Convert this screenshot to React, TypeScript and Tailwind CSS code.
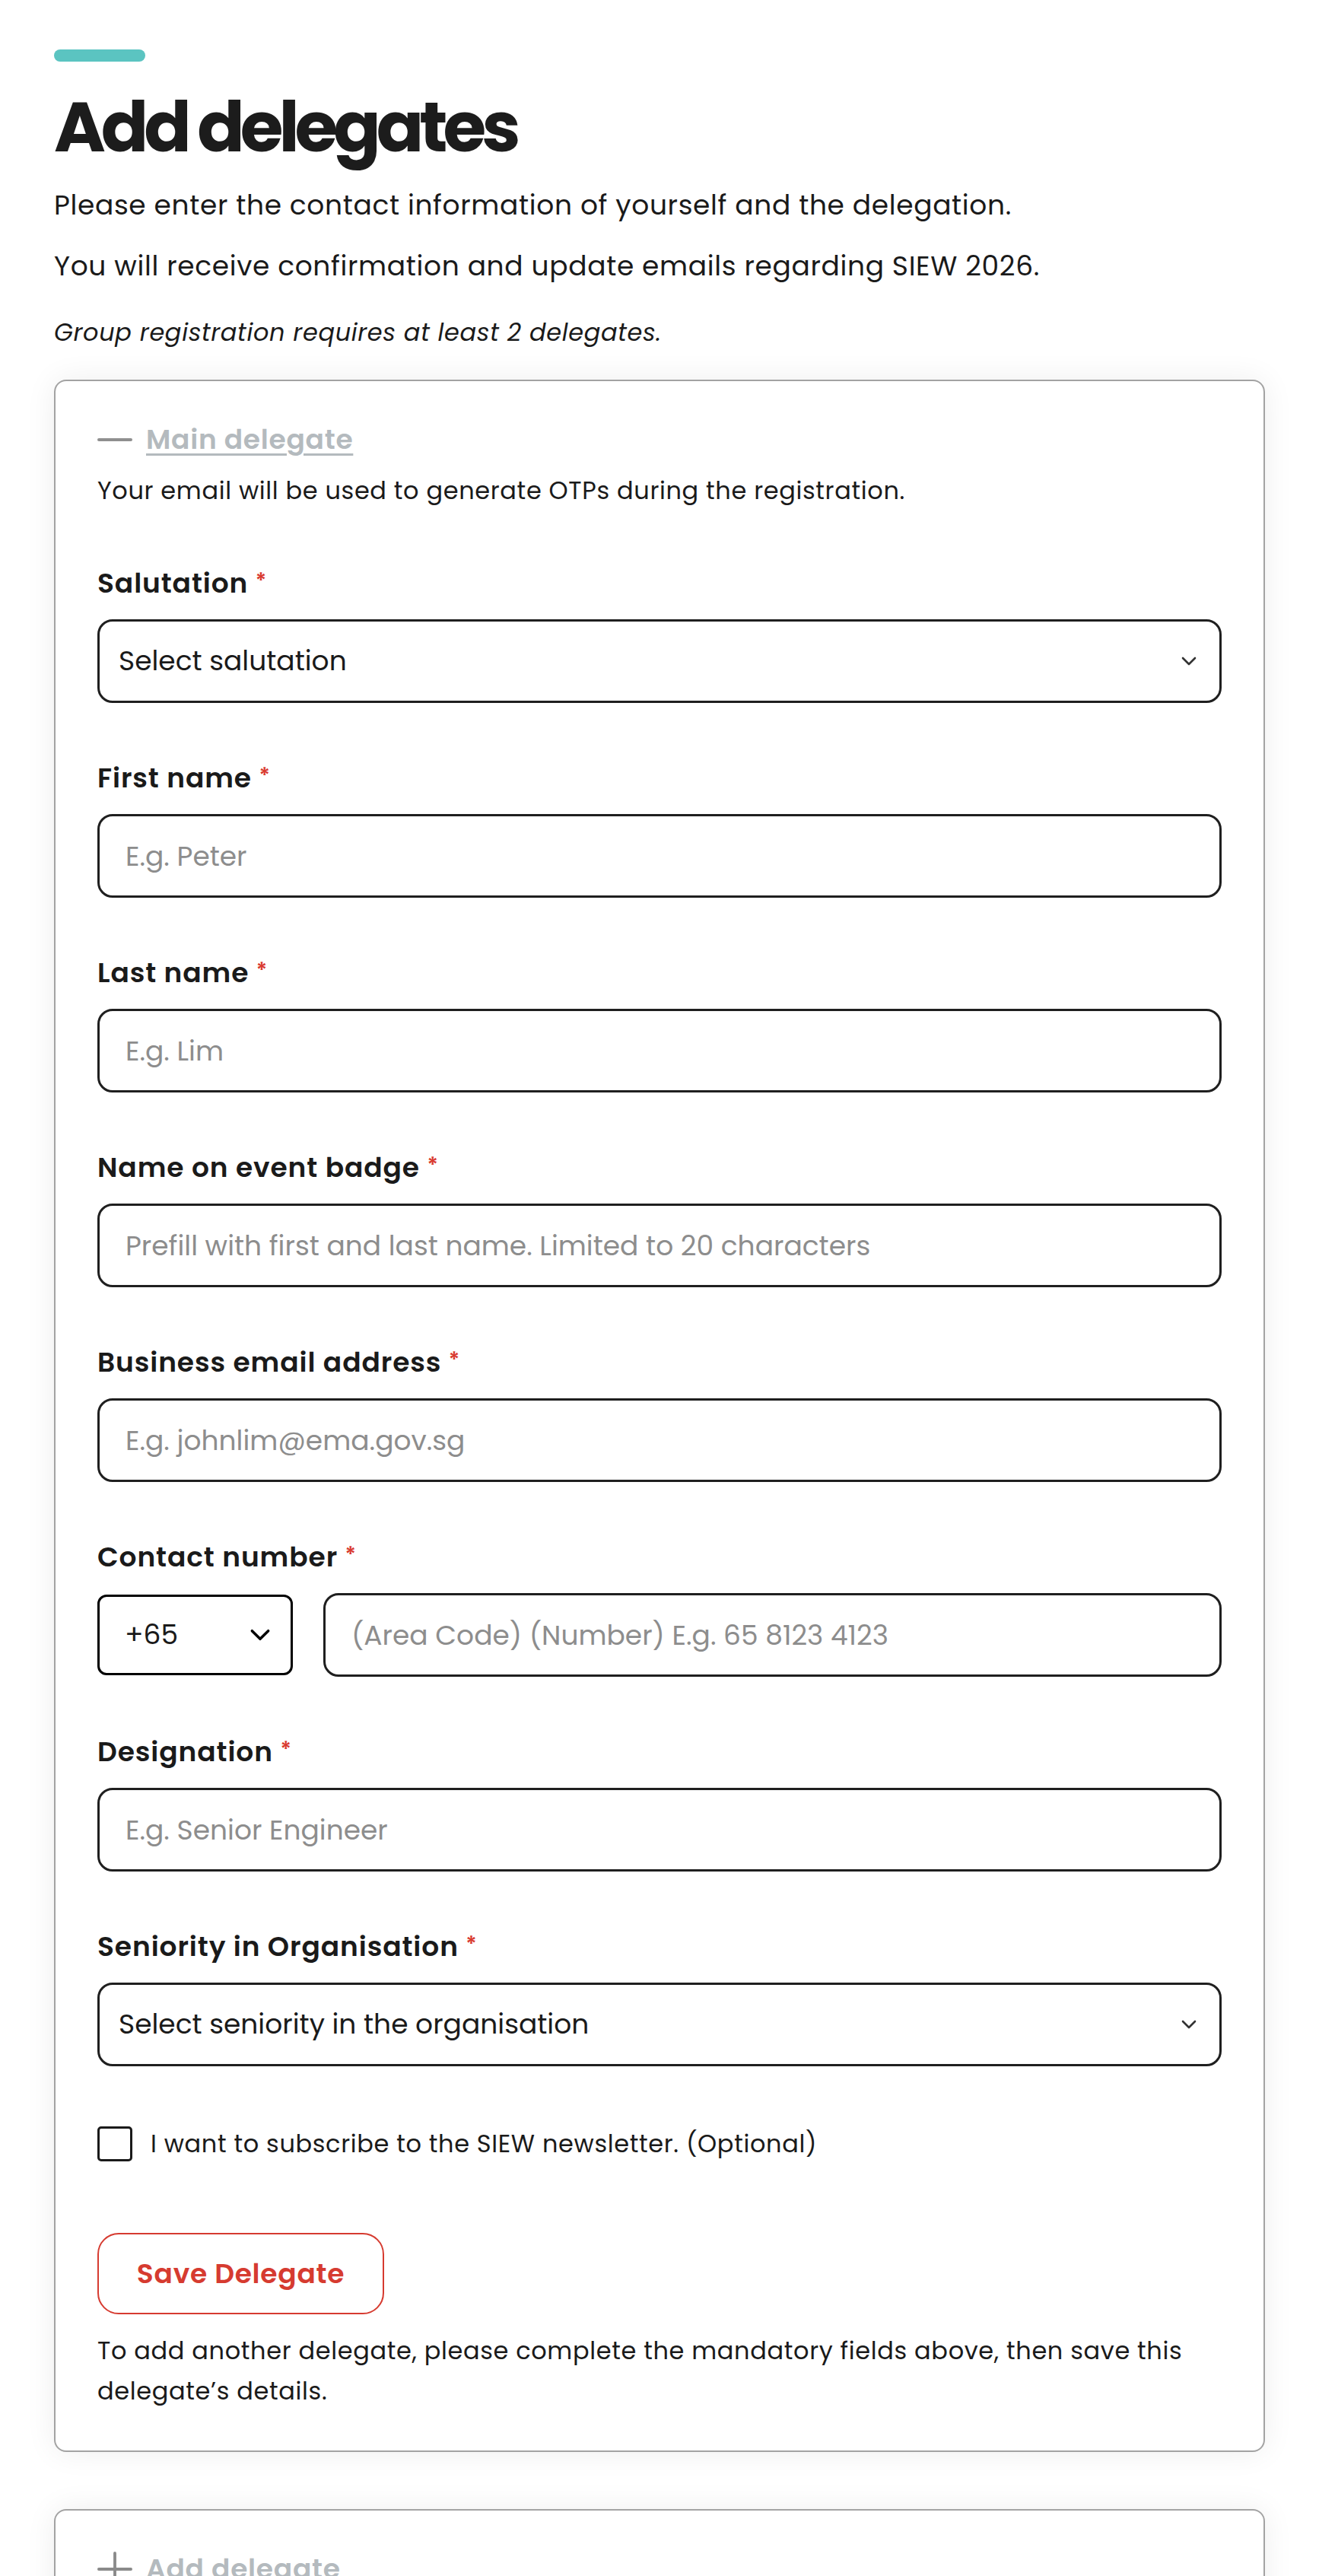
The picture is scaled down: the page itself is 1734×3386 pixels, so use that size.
import { useState } from "react";

const fields = [
  { label: "First name", placeholder: "E.g. Peter" },
  { label: "Last name", placeholder: "E.g. Lim" },
  {
    label: "Name on event badge",
    placeholder: "Prefill with first and last name. Limited to 20 characters",
  },
  { label: "Business email address", placeholder: "E.g. johnlim@ema.gov.sg" },
];

const Chevron = ({ className }: { className?: string }) => (
  <svg viewBox="0 0 20 12" className={className} fill="none">
    <path d="M2 2l8 8 8-8" stroke="currentColor" strokeWidth="2.6" strokeLinecap="round" strokeLinejoin="round" />
  </svg>
);

const Label = ({ text }: { text: string }) => (
  <label className="block h-[54px] text-[36px] font-semibold leading-[54px] tracking-[0.025em] text-[#1a1a1a]">
    {text} <span className="relative -top-[6px] text-[28px] leading-none text-[#d93a2f]">*</span>
  </label>
);

const SelectBox = ({ value }: { value: string }) => (
  <div className="flex h-[110px] items-center justify-between rounded-[20px] border-[3px] border-[#1f1f1f] pl-[25px] pr-[30px] text-[36px] tracking-normal text-[#1a1a1a]">
    <span>{value}</span>
    <Chevron className="h-[12px] w-[20px] text-[#333]" />
  </div>
);

const TextBox = ({ placeholder }: { placeholder: string }) => (
  <input
    placeholder={placeholder}
    className="h-[110px] w-full rounded-[20px] border-[3px] border-[#1f1f1f] px-[34px] text-[36px] tracking-normal text-[#1a1a1a] outline-none placeholder:text-[#8d8d8d]"
  />
);

export default function App() {
  const [subscribe, setSubscribe] = useState(false);

  return (
    <div className="min-h-screen bg-white px-[71px] pt-[65px] font-['Poppins','Inter',sans-serif] tracking-[0.04em] text-[#1a1a1a]">
      <div className="h-[16px] w-[120px] rounded-full bg-[#5bc4c1]" />
      <h1 className="mt-[30px] text-[92px] font-bold leading-[112px] tracking-[-6px] text-[#1c1c1c]">
        Add delegates
      </h1>
      <p className="mt-[20px] text-[36px] leading-[54px]">
        Please enter the contact information of yourself and the delegation.
      </p>
      <p className="mt-[26px] text-[36px] leading-[54px]">
        You will receive confirmation and update emails regarding SIEW 2026.
      </p>
      <p className="mt-[36px] text-[32px] italic leading-[48px]">
        Group registration requires at least 2 delegates.
      </p>

      {/* Main delegate card */}
      <section className="mt-[38px] rounded-[16px] border-2 border-[#a3a3a3] bg-white px-[55px] pb-[52px] pt-[50px] shadow-[0_0_40px_rgba(0,0,0,0.07)]">
        <div className="flex items-center gap-[18px]">
          <span className="h-[4px] w-[46px] rounded-full bg-[#8f8f8f]" />
          <span className="text-[36px] font-semibold leading-[54px] tracking-[0.02em] text-[#b4babe] underline decoration-[3px] underline-offset-[6px]">
            Main delegate
          </span>
        </div>
        <p className="mt-[16px] text-[32px] leading-[48px]">
          Your email will be used to generate OTPs during the registration.
        </p>

        <div className="mt-[71px] flex flex-col gap-[72px]">
          <div className="flex flex-col gap-[20px]">
            <Label text="Salutation" />
            <SelectBox value="Select salutation" />
          </div>
          {fields.map((f) => (
            <div key={f.label} className="flex flex-col gap-[20px]">
              <Label text={f.label} />
              <TextBox placeholder={f.placeholder} />
            </div>
          ))}
          <div className="flex flex-col gap-[20px]">
            <Label text="Contact number" />
            <div className="flex items-center gap-[40px]">
              <div className="flex h-[106px] w-[257px] shrink-0 items-center justify-between rounded-[12px] border-[3px] border-black pl-[33px] pr-[26px] text-[36px] tracking-normal">
                <span>+65</span>
                <Chevron className="h-[16px] w-[28px] text-black" />
              </div>
              <TextBox placeholder="(Area Code) (Number) E.g. 65 8123 4123" />
            </div>
          </div>
          <div className="flex flex-col gap-[20px]">
            <Label text="Designation" />
            <TextBox placeholder="E.g. Senior Engineer" />
          </div>
          <div className="flex flex-col gap-[20px]">
            <Label text="Seniority in Organisation" />
            <SelectBox value="Select seniority in the organisation" />
          </div>
        </div>

        <label className="mt-[78px] flex cursor-pointer items-center gap-[24px] text-[32px] leading-[48px]">
          <input
            type="checkbox"
            checked={subscribe}
            onChange={(e) => setSubscribe(e.target.checked)}
            className="h-[46px] w-[46px] shrink-0 appearance-none rounded-[5px] border-[3px] border-[#1a1a1a] checked:bg-[#1a1a1a]"
          />
          I want to subscribe to the SIEW newsletter. (Optional)
        </label>

        <button
          type="button"
          className="mt-[93px] flex h-[107px] w-[377px] items-center justify-center rounded-[28px] border-2 border-[#d63b30] text-[36px] font-semibold tracking-[0.02em] text-[#d63b30]"
        >
          Save Delegate
        </button>
        <p className="mt-[21px] max-w-[1480px] text-[32px] leading-[53px]">
          To add another delegate, please complete the mandatory fields above, then save this delegate’s details.
        </p>
      </section>

      {/* Add delegate card */}
      <section className="mt-[75px] rounded-[16px] border-2 border-[#a3a3a3] bg-white px-[55px] pb-[50px] pt-[50px] shadow-[0_0_40px_rgba(0,0,0,0.07)]">
        <div className="flex items-center gap-[18px]">
          <svg viewBox="0 0 48 48" className="h-[46px] w-[46px]" fill="none">
            <path d="M24 2v44M2 24h44" stroke="#8a8a8a" strokeWidth="4" strokeLinecap="round" />
          </svg>
          <span className="text-[36px] font-semibold leading-[54px] tracking-[0.02em] text-[#b4babe]">Add delegate</span>
        </div>
      </section>
    </div>
  );
}
